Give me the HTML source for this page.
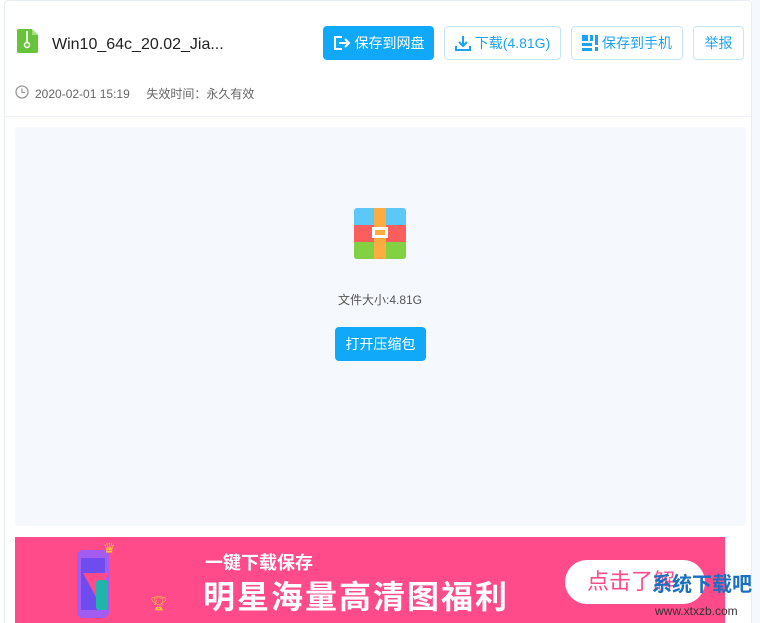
<!DOCTYPE html>
<html><head><meta charset="utf-8"><style>
*{margin:0;padding:0;box-sizing:border-box}
html,body{width:760px;height:623px;overflow:hidden}
body{background:#fff;font-family:"Liberation Sans","Noto Sans CJK SC",sans-serif;position:relative}
.card{position:absolute;left:4px;top:0;width:748px;height:623px;border:1px solid #e8edf3;border-bottom:none;border-radius:4px 4px 0 0;background:#fff}
.strip{position:absolute;left:752px;top:0;width:8px;height:623px;background:#f5f8fc}
.btn{position:absolute;top:26px;height:34px;border:1px solid #c5e5fb;border-radius:4px;color:#1aa3f5;font-size:14px;display:flex;align-items:center;justify-content:center;gap:4px;background:#fff}
.abs{position:absolute}
</style></head><body>
<div class="strip"></div>
<div class="card"></div>
<svg class="abs" style="left:17px;top:29px" width="21" height="24"><path d="M2 0h13l6 6v16a2 2 0 0 1-2 2H2a2 2 0 0 1-2-2V2a2 2 0 0 1 2-2z" fill="#69c33a"/><path d="M15 0v6h6z" fill="#a6e07e"/><rect x="9" y="2" width="2" height="12" fill="#fff" opacity=".8"/><circle cx="10" cy="16" r="2.5" fill="none" stroke="#fff" stroke-width="1.5"/></svg>
<div class="abs" style="left:52px;top:36px;font-size:16px;color:#222">Win10_64c_20.02_Jia...</div>
<div class="btn" style="left:323px;width:111px;background:#10a8f8;border-color:#10a8f8;color:#fff"><svg width="18" height="16"><path d="M9 2H2v12h7M6 8h10M12 4l4 4-4 4" fill="none" stroke="#fff" stroke-width="2"/></svg>保存到网盘</div>
<div class="btn" style="left:444px;width:117px"><svg width="16" height="16"><path d="M8 1v10M4 7l4 4 4-4M1 11v4h14v-4" fill="none" stroke="#1aa3f5" stroke-width="2"/></svg>下载(4.81G)</div>
<div class="btn" style="left:571px;width:112px"><svg width="16" height="16" fill="#1aa3f5"><rect x="0" y="0" width="6" height="6"/><rect x="8" y="0" width="3" height="6"/><rect x="13" y="0" width="3" height="10"/><rect x="0" y="8" width="10" height="3"/><rect x="0" y="13" width="10" height="3"/><rect x="13" y="12" width="3" height="4"/></svg>保存到手机</div>
<div class="btn" style="left:693px;width:51px">举报</div>
<svg class="abs" style="left:15px;top:85px" width="14" height="14"><circle cx="7" cy="7" r="6" fill="none" stroke="#999" stroke-width="1.3"/><path d="M7 3.5V7.5h3" fill="none" stroke="#999" stroke-width="1.3"/></svg>
<div class="abs" style="left:35px;top:85px;font-size:12px;color:#666">2020-02-01 15:19&nbsp;&nbsp;&nbsp;&nbsp;&nbsp;失效时间：永久有效</div>
<div class="abs" style="left:5px;top:116px;width:746px;height:1px;background:#eef1f5"></div>
<div class="abs" style="left:15px;top:127px;width:731px;height:399px;background:#f5f8fd;border-radius:4px"></div>
<svg class="abs" style="left:354px;top:208px" width="52" height="51"><rect width="52" height="51" rx="3" fill="#5bc8f8"/><rect y="17" width="52" height="17" fill="#fc5e5e"/><path d="M0 34h52v14a3 3 0 0 1-3 3H3a3 3 0 0 1-3-3z" fill="#82d143"/><rect x="20" width="12" height="51" fill="#fdac41"/><rect x="18" y="19" width="16" height="11" fill="#fff"/><rect x="21" y="22" width="10" height="5" fill="#fdac41"/></svg>
<div class="abs" style="left:0;width:760px;text-align:center;top:291px;font-size:12px;color:#555">文件大小:4.81G</div>
<div class="abs" style="left:335px;top:327px;width:91px;height:34px;background:#10a8f8;border-radius:4px;color:#fff;font-size:14px;text-align:center;line-height:34px">打开压缩包</div>
<div class="abs" style="left:15px;top:537px;width:710px;height:86px;background:#ff4b89;overflow:hidden">
<div class="abs" style="left:62px;top:13px;width:32px;height:68px;border-radius:6px;background:#a25cf2"></div>
<div class="abs" style="left:66px;top:21px;width:24px;height:52px;background:#6f4cf0"></div>
<svg class="abs" style="left:68px;top:36px" width="26" height="26"><path d="M0 0h26L13 24z" fill="#ff4b89"/></svg>
<div class="abs" style="left:81px;top:43px;width:12px;height:30px;background:#1fb5a8;border-radius:3px"></div>
<div class="abs" style="left:88px;top:3px;font-size:14px;color:#f5c33b;line-height:16px">♛</div>
<div class="abs" style="left:135px;top:58px;font-size:14px;color:#f5c33b;line-height:16px">🏆︎</div>
<div class="abs" style="left:190px;top:12px;font-size:18px;color:#fff;font-weight:bold">一键下载保存</div>
<div class="abs" style="left:188px;top:35px;font-size:32px;color:#fff;font-weight:bold;letter-spacing:2px">明星海量高清图福利</div>
<div class="abs" style="left:550px;top:23px;width:140px;height:44px;background:#fff;border-radius:22px;color:#ff4b89;font-size:22px;line-height:44px;padding-left:22px">点击了解</div>
</div>
<div class="abs" style="left:652px;top:572px;font-size:20px;color:#1a6fc0;font-weight:bold;line-height:26px">系统下载吧</div>
<div class="abs" style="left:655px;top:603px;font-size:12px;color:#333;line-height:16px">www.xtxzb.com</div>
</body></html>
